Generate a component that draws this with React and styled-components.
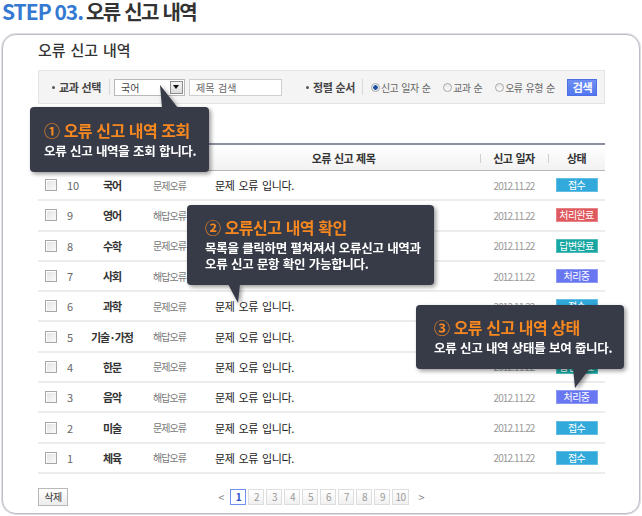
import React from 'react';
import styled, { createGlobalStyle } from 'styled-components';

const GlobalStyle = createGlobalStyle`
  html, body {
    margin: 0;
    padding: 0;
    background: #ffffff;
  }
  body {
    font-family: "Noto Sans CJK KR", "Noto Sans", sans-serif;
    color: #333;
  }
  * { box-sizing: border-box; }
`;

const Page = styled.div`
  position: relative;
  width: 642px;
  height: 516px;
  padding: 0 2px;
  overflow: hidden;
`;

const StepTitle = styled.h1`
  margin: 0 0 12px;
  height: 22px;
  line-height: 22px;
  font-size: 20px;
  font-weight: 700;
  color: #333;
  letter-spacing: -1.7px;
  word-spacing: 2px;
  white-space: nowrap;
`;

const StepNo = styled.span`
  color: #3479d2;
  font-size: 21px;
  letter-spacing: -1px;
  word-spacing: 0;
  margin-right: 3px;
`;

const Panel = styled.div`
  border: 1px solid #bdbdc7;
  box-shadow: 0 0 0 1px #dedee4;
  border-radius: 14px;
  padding: 5px 34px 7px 35px;
  background: #fff;
`;

const PanelHeading = styled.h2`
  margin: 0;
  font-size: 15px;
  line-height: 20px;
  font-weight: 500;
  color: #333;
  letter-spacing: 0;
  word-spacing: 1.5px;
`;

const SearchBar = styled.div`
  margin-top: 10px;
  height: 34px;
  border: 1px solid #e4e4e4;
  background: #f4f4f4;
  display: flex;
  align-items: center;
  padding-left: 13px;
`;

const FieldLabel = styled.span`
  display: flex;
  align-items: center;
  font-size: 11px;
  font-weight: 700;
  color: #444;
  letter-spacing: -0.4px;
  word-spacing: 1px;
  white-space: nowrap;
  margin-left: ${p => p.$ml || 0}px;
  &::before {
    content: '';
    width: 3px;
    height: 3px;
    border-radius: 50%;
    background: #555;
    margin-right: 4px;
  }
`;

const Divider = styled.span`
  width: 1px;
  height: 16px;
  background: #d9d9d9;
  margin: 0 ${p => p.$right}px 0 ${p => p.$left}px;
`;

const SelectBox = styled.div`
  width: 71px;
  height: 17px;
  border: 1px solid #b8b8b8;
  background: #fff;
  display: flex;
  align-items: center;
  justify-content: space-between;
  padding: 0 1px 0 6px;
  font-size: 10px;
  color: #444;
`;

const SelectArrow = styled.span`
  width: 13px;
  height: 13px;
  border: 1px solid #8e8e8e;
  background: linear-gradient(#f6f6f6, #dcdcdc);
  display: flex;
  align-items: center;
  justify-content: center;
  &::after {
    content: '';
    border-left: 3px solid transparent;
    border-right: 3px solid transparent;
    border-top: 4px solid #111;
  }
`;

const TextInput = styled.div`
  width: 93px;
  height: 17px;
  margin-left: 4px;
  border: 1px solid #cfcfcf;
  background: #fff;
  font-size: 10px;
  line-height: 15px;
  padding-left: 6px;
  color: #666;
  word-spacing: 1.5px;
`;

const RadioItem = styled.label`
  display: flex;
  align-items: center;
  gap: 1px;
  font-size: 10px;
  color: #666;
  letter-spacing: -0.6px;
  word-spacing: 1.5px;
  margin-right: ${p => p.$mr}px;
  white-space: nowrap;
`;

const RadioDot = styled.span`
  width: 9px;
  height: 9px;
  border-radius: 50%;
  border: 1px solid #a9a9a9;
  background: ${p => (p.$on ? 'radial-gradient(circle, #1e4f9c 0 2px, #e9eef6 2.5px)' : 'linear-gradient(#e8e8e8, #fbfbfb)')};
`;

const SearchButton = styled.button`
  width: 30px;
  height: 17px;
  padding: 0;
  border: 1px solid #4d6fe6;
  background: linear-gradient(#6f8ff6, #5277ee);
  color: #fff;
  font-family: inherit;
  font-size: 11px;
  font-weight: 700;
  letter-spacing: -0.5px;
  line-height: 15px;
`;

const COLS = '24px 30px 40px 75px 273px 68px 57px';

const Table = styled.div`
  margin-top: 39px;
`;

const HeadRow = styled.div`
  display: grid;
  grid-template-columns: ${COLS};
  height: 28px;
  border-top: 2px solid #8c91a2;
  border-bottom: 1px solid #b5b5b5;
  background: linear-gradient(#ffffff, #f2f2f2);
`;

const HeadCell = styled.div`
  position: relative;
  display: flex;
  align-items: center;
  justify-content: center;
  font-size: 11px;
  font-weight: 700;
  color: #333;
  letter-spacing: -0.5px;
  word-spacing: 1px;
  &::before {
    content: '';
    display: ${p => (p.$sep ? 'block' : 'none')};
    position: absolute;
    left: 0;
    top: 9px;
    width: 1px;
    height: 9px;
    background: #d0d0d0;
  }
`;

const Row = styled.div`
  display: grid;
  grid-template-columns: ${COLS};
  height: 30.3px;
  border-bottom: 2px solid #ececec;
  align-items: center;
`;

const Cell = styled.div`
  display: flex;
  align-items: center;
  justify-content: ${p => p.$align || 'center'};
  padding-left: ${p => p.$pl || 0}px;
  font-size: ${p => p.$size || 11}px;
  font-weight: ${p => (p.$bold ? 700 : 400)};
  color: ${p => p.$color || '#333'};
  letter-spacing: ${p => p.$ls ?? -0.4}px;
  word-spacing: 2px;
  white-space: nowrap;
`;

const CheckBox = styled.span`
  width: 12px;
  height: 12px;
  margin-left: 7px;
  border: 1px solid #a7a7a7;
  background: linear-gradient(135deg, #e2e2e2, #fafafa);
  box-shadow: inset 1px 1px 0 #fff;
`;

const STATUS = {
  접수: '#31a9da',
  처리완료: '#df595e',
  답변완료: '#17a6a2',
  처리중: '#6877f1',
};

const Badge = styled.span`
  width: 42px;
  height: 14px;
  background: ${p => p.$bg};
  box-shadow: inset 0 0 0 1px rgba(255, 255, 255, 0.25);
  color: #fff;
  font-size: 10px;
  line-height: 14px;
  text-align: center;
  letter-spacing: -0.6px;
`;

const Footer = styled.div`
  margin-top: 14px;
  display: grid;
  grid-template-columns: 1fr auto 1fr;
  align-items: center;
  height: 18px;
`;

const DeleteButton = styled.button`
  justify-self: start;
  width: 30px;
  height: 18px;
  padding: 0;
  border: 1px solid #b9b9b9;
  background: linear-gradient(#ffffff, #ececec);
  font-family: inherit;
  font-size: 10px;
  color: #333;
  letter-spacing: -0.5px;
  line-height: 16px;
`;

const Pager = styled.div`
  display: flex;
  align-items: center;
  gap: 2px;
`;

const PagerArrow = styled.span`
  font-size: 11px;
  color: #888;
  margin: 0 ${p => p.$r || 0}px 0 ${p => p.$l || 0}px;
`;

const PageBox = styled.span`
  min-width: 16px;
  height: 16px;
  padding: 0 2px;
  border: 1px solid ${p => (p.$active ? '#6f8ef2' : '#dedede')};
  background: ${p => (p.$active ? '#fff' : 'linear-gradient(#ffffff, #f0f0f0)')};
  color: ${p => (p.$active ? '#2f4fc7' : '#999')};
  font-weight: ${p => (p.$active ? 700 : 400)};
  font-size: 10px;
  line-height: 14px;
  text-align: center;
  letter-spacing: -0.5px;
`;

const Tooltip = styled.div`
  position: absolute;
  left: ${p => p.$x}px;
  top: ${p => p.$y}px;
  width: ${p => p.$w}px;
  height: ${p => p.$h}px;
  padding: ${p => p.$pt || 11}px 10px 0 ${p => p.$pl || 14}px;
  background: #373b48;
  border-radius: 4px;
  filter: drop-shadow(2px 2px 2px rgba(0, 0, 0, 0.4));
  z-index: 5;
`;

const TipArrow = styled.svg`
  position: absolute;
  left: 0;
  top: 0;
  overflow: visible;
  pointer-events: none;
`;

const TipTitle = styled.div`
  font-size: 16px;
  line-height: 22px;
  font-weight: 700;
  color: #f7871f;
  letter-spacing: -0.5px;
  word-spacing: 1px;
  margin-bottom: 2px;
  white-space: nowrap;
`;

const TipText = styled.div`
  font-size: 12.5px;
  line-height: 16px;
  font-weight: 700;
  color: #fff;
  letter-spacing: -0.3px;
  word-spacing: 1px;
  white-space: nowrap;
`;

const rows = [
  { no: 10, subject: '국어', type: '문제오류', status: '접수' },
  { no: 9, subject: '영어', type: '해답오류', status: '처리완료' },
  { no: 8, subject: '수학', type: '문제오류', status: '답변완료' },
  { no: 7, subject: '사회', type: '해답오류', status: '처리중' },
  { no: 6, subject: '과학', type: '문제오류', status: '접수' },
  { no: 5, subject: '기술·가정', type: '해답오류', status: '처리완료' },
  { no: 4, subject: '한문', type: '문제오류', status: '답변완료' },
  { no: 3, subject: '음악', type: '해답오류', status: '처리중' },
  { no: 2, subject: '미술', type: '문제오류', status: '접수' },
  { no: 1, subject: '체육', type: '해답오류', status: '접수' },
];

const tips = [
  {
    x: 30, y: 107, w: 179, h: 65,
    pt: 12,
    arrow: '130,-22 132,1 148,1',
    title: '① 오류 신고 내역 조회',
    lines: ['오류 신고 내역을 조회 합니다.'],
  },
  {
    x: 187, y: 205, w: 247, h: 80,
    pl: 18,
    arrow: '41,79 53,79 51,98',
    title: '② 오류신고 내역 확인',
    lines: ['목록을 클릭하면 펼쳐져서 오류신고 내역과', '오류 신고 문항 확인 가능합니다.'],
  },
  {
    x: 416, y: 305, w: 208, h: 64,
    pl: 18,
    arrow: '157,63 174,63 159,83',
    title: '③ 오류 신고 내역 상태',
    lines: ['오류 신고 내역 상태를 보여 줍니다.'],
  },
];

export default function App() {
  return (
    <Page>
      <GlobalStyle />
      <StepTitle>
        <StepNo>STEP 03.</StepNo>오류 신고 내역
      </StepTitle>

      <Panel>
        <PanelHeading>오류 신고 내역</PanelHeading>

        <SearchBar>
          <FieldLabel>교과 선택</FieldLabel>
          <Divider $left={8} $right={4} />
          <SelectBox>
            국어
            <SelectArrow />
          </SelectBox>
          <TextInput>제목 검색</TextInput>
          <FieldLabel $ml={24}>정렬 순서</FieldLabel>
          <Divider $left={7} $right={8} />
          <RadioItem $mr={13}><RadioDot $on />신고 일자 순</RadioItem>
          <RadioItem $mr={13}><RadioDot />교과 순</RadioItem>
          <RadioItem $mr={13}><RadioDot />오류 유형 순</RadioItem>
          <SearchButton>검색</SearchButton>
        </SearchBar>

        <Table>
          <HeadRow>
            <HeadCell />
            <HeadCell>번호</HeadCell>
            <HeadCell>교과</HeadCell>
            <HeadCell>오류 유형</HeadCell>
            <HeadCell>오류 신고 제목</HeadCell>
            <HeadCell $sep>신고 일자</HeadCell>
            <HeadCell $sep>상태</HeadCell>
          </HeadRow>
          {rows.map(r => (
            <Row key={r.no}>
              <Cell $align="flex-start"><CheckBox /></Cell>
              <Cell $align="flex-start" $pl={5} $color="#666" $ls={0}>{r.no}</Cell>
              <Cell $bold $ls={-1}>{r.subject}</Cell>
              <Cell $size={10} $color="#777" $ls={-1}>{r.type}</Cell>
              <Cell $align="flex-start" $pl={8} $color="#222">문제 오류 입니다.</Cell>
              <Cell $size={10} $color="#999" $ls={-0.9}>2012.11.22</Cell>
              <Cell><Badge $bg={STATUS[r.status]}>{r.status}</Badge></Cell>
            </Row>
          ))}
        </Table>

        <Footer>
          <DeleteButton>삭제</DeleteButton>
          <Pager>
            <PagerArrow $r={4}>&lt;</PagerArrow>
            {[1, 2, 3, 4, 5, 6, 7, 8, 9, 10].map(n => (
              <PageBox key={n} $active={n === 1}>{n}</PageBox>
            ))}
            <PagerArrow $l={8}>&gt;</PagerArrow>
          </Pager>
        </Footer>
      </Panel>

      {tips.map(t => (
        <Tooltip key={t.title} $x={t.x} $y={t.y} $w={t.w} $h={t.h} $pl={t.pl} $pt={t.pt}>
          <TipArrow width={t.w} height={t.h}>
            <polygon points={t.arrow} fill="#373b48" />
          </TipArrow>
          <TipTitle>{t.title}</TipTitle>
          {t.lines.map(l => (
            <TipText key={l}>{l}</TipText>
          ))}
        </Tooltip>
      ))}
    </Page>
  );
}
